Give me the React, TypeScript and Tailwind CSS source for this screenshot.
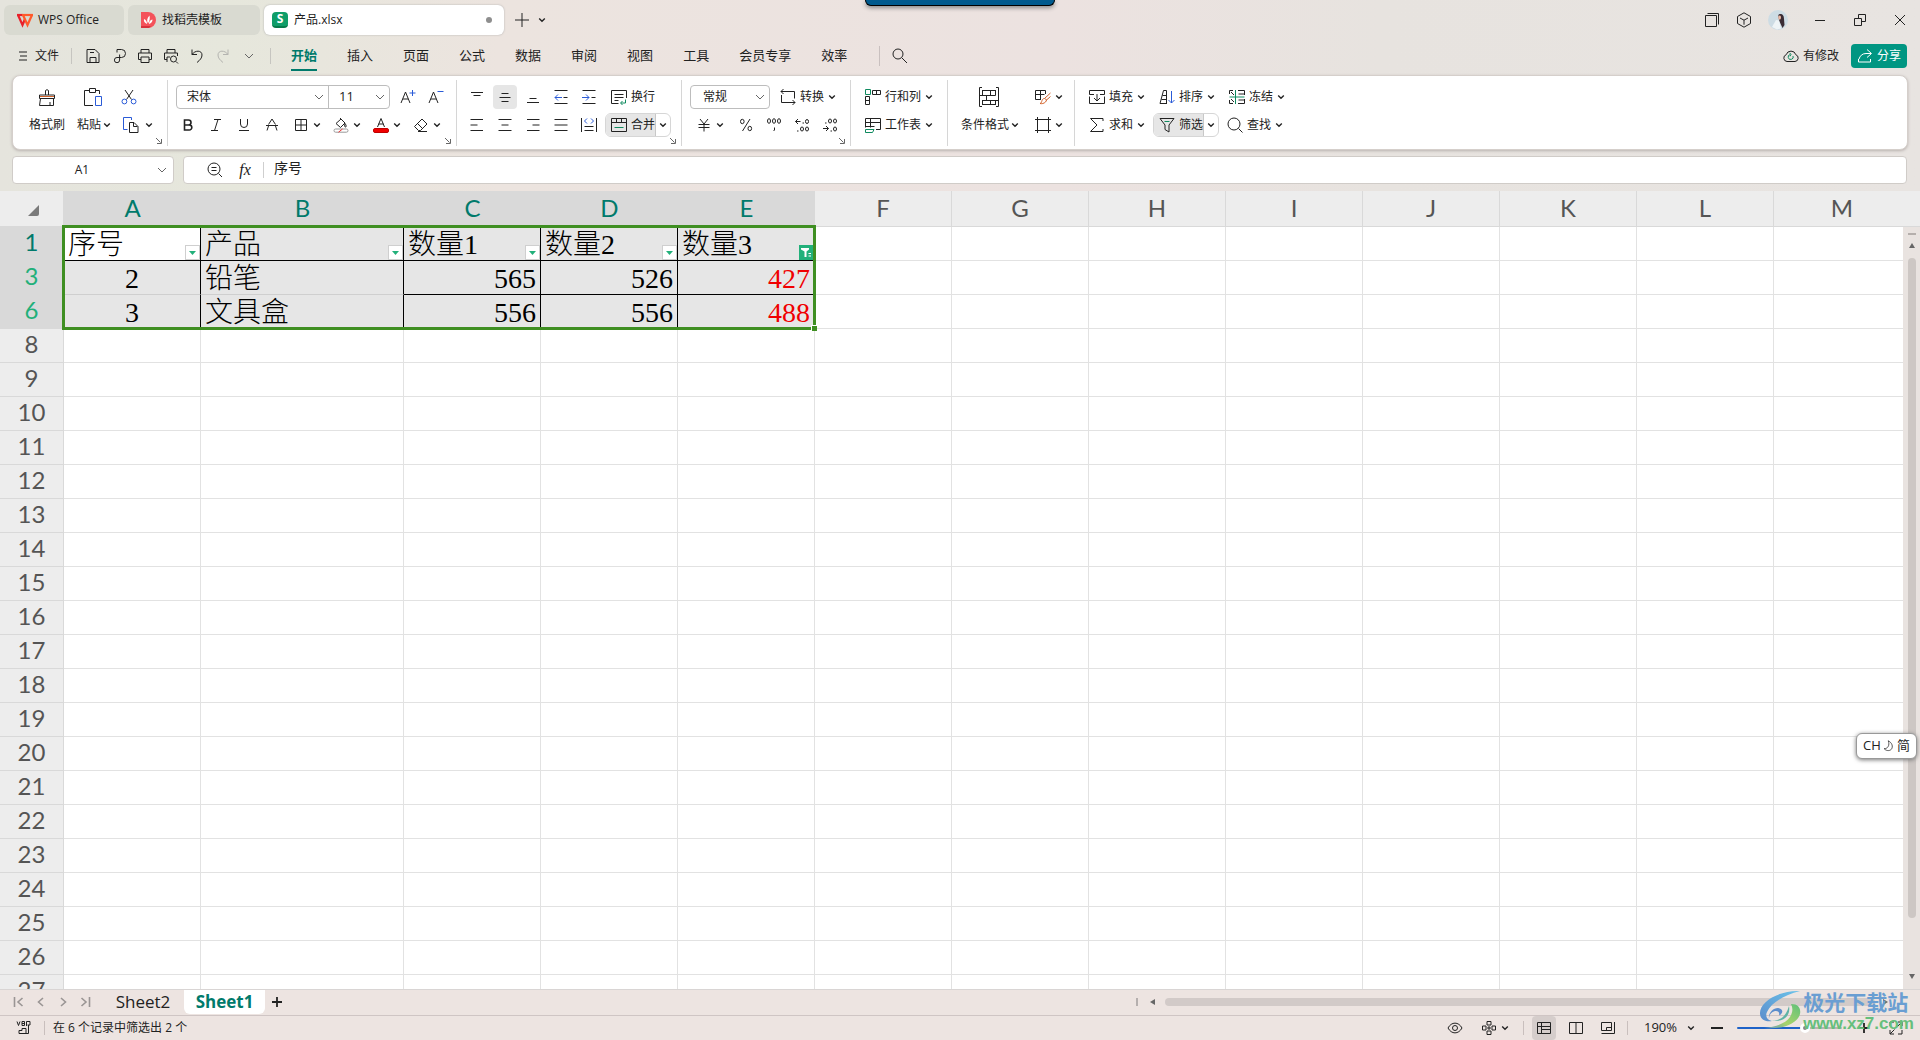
import React from "react";

type IconProps = {
  d?: string;
  blue?: string;
  green?: string;
  orange?: string;
  box?: number;
  className?: string;
  children?: React.ReactNode;
};

function Icon({ d, blue, green, orange, box = 16, className = "size-4", children }: IconProps) {
  return (
    <svg viewBox={`0 0 ${box} ${box}`} className={`shrink-0 ${className}`} fill="none" stroke="currentColor" strokeWidth="1" aria-hidden="true">
      {d && <path d={d} />}
      {blue && <path d={blue} stroke="#2a5bd7" />}
      {green && <path d={green} stroke="#0f8a5f" />}
      {orange && <path d={orange} stroke="#d2622a" />}
      {children}
    </svg>
  );
}

function Chev() {
  return (
    <svg viewBox="0 0 8 8" className="size-2 shrink-0" fill="none" stroke="currentColor" strokeWidth="1.4" aria-hidden="true">
      <path d="M1.2 2.6 4 5.3l2.8-2.7" />
    </svg>
  );
}

function ThinChev() {
  return (
    <svg viewBox="0 0 10 10" className="size-2.5 shrink-0" fill="none" stroke="#666" strokeWidth="1" aria-hidden="true">
      <path d="M1 3l4 4 4-4" />
    </svg>
  );
}

function Cell({ label, active, children }: { label: string; active?: boolean; children: React.ReactNode }) {
  return (
    <div className="flex w-7 justify-center">
      <button aria-label={label} className={`flex size-6 items-center justify-center rounded ${active ? "bg-[#e6e6e6]" : ""}`}>
        {children}
      </button>
    </div>
  );
}

function Split({ label, children }: { label: string; children: React.ReactNode }) {
  return (
    <button aria-label={label} className="flex h-6 w-10 items-center gap-1 pl-1">
      {children}
      <Chev />
    </button>
  );
}

function Tool({ text, chev = true, children }: { text: string; chev?: boolean; children: React.ReactNode }) {
  return (
    <button className="flex h-6 items-center gap-1 whitespace-nowrap">
      {children}
      <span>{text}</span>
      {chev && <Chev />}
    </button>
  );
}

function Pressed({ text, children }: { text: string; children: React.ReactNode }) {
  return (
    <div className="-mx-1.5 flex h-6 overflow-hidden rounded-md border border-[#d6d6d6]">
      <button className="flex items-center gap-1 border-r border-[#c8c8c8] bg-[#e6e6e6] pl-[5px] whitespace-nowrap">
        {children}
        <span>{text}</span>
      </button>
      <button aria-label={`${text}选项`} className="flex w-3.5 items-center justify-center">
        <Chev />
      </button>
    </div>
  );
}

function Sep() {
  return <div className="mt-1 h-[66px] w-px shrink-0 bg-[#d6d6d6]" />;
}

function Launch() {
  return (
    <button aria-label="更多设置" className="absolute right-1 bottom-1 size-2 text-[#666]">
      <Icon box={8} className="size-2" d="M1 1l4.5 4.5M6.500 2v4.500H2" />
    </button>
  );
}

const H = {
  left: "M1.5 2.5h12.500M1.5 8h7M1.5 13.5h12.500",
  center: "M1.5 2.5h13M4.5 8h7M1.5 13.5h13",
  right: "M2 2.5h12.500M7.500 8h7M2 13.5h12.500",
  just: "M1.5 2.5h13M1.5 8h13M1.5 13.5h13",
};

function TitleBar() {
  return (
    <header className="flex h-10 shrink-0 items-center pl-1">
      <div role="tablist" className="flex h-10 items-center">
        <button role="tab" className="flex h-[30px] w-[120px] items-center gap-1 rounded-md bg-[#d9dad1] pl-3">
          <svg viewBox="0 0 18 16" className="h-4 w-[18px]" fill="none" strokeWidth="2.200" aria-hidden="true">
            <path d="M1 3h5.500" stroke="#e8202a" />
            <path d="M2 3l4.500 10L9 7" stroke="#e8202a" />
            <path d="M6 3h11" stroke="#ff5a2c" />
            <path d="M7 3l4.500 10L16 3" stroke="#ff5a2c" />
          </svg>
          <span>WPS Office</span>
        </button>
        <button role="tab" className="ml-1 flex h-[30px] w-[132px] items-center gap-1.5 rounded-md bg-[#d9dad1] pl-3">
          <svg viewBox="0 0 16 16" className="size-4" aria-hidden="true">
            <path d="M1 0h7a8 8 0 010 16H1z" fill="#f4525a" />
            <path d="M1 14h10l-2 2H1z" fill="#d8323c" />
            <path d="M8 11.500C6.500 9 7 6 9.500 3.500c.6 3 .2 5.500-1.500 8zM7 12C4.500 11 3.500 9 4 7c2 1 3 2.500 3 5zM9 12c2.500-.8 3.500-2.200 3.500-4.500C10.300 8 9 9.500 9 12z" fill="#fff" />
          </svg>
          <span>找稻壳模板</span>
        </button>
        <button role="tab" aria-selected="true" className="ml-1 flex h-[30px] w-[240px] items-center gap-1.5 rounded-md bg-white px-2 shadow-[0_0_2px_#aaa]">
          <span className="flex size-4 items-center justify-center rounded-sm border-b-2 border-[#067a4a] bg-[#0f9d68] text-xs leading-3 font-bold text-white">S</span>
          <span>产品.xlsx</span>
          <span className="mr-1 ml-auto size-1.5 rounded-full bg-[#8e8e8e]" />
        </button>
      </div>
      <button aria-label="新建" className="ml-2.5 flex size-4 items-center justify-center">
        <Icon d="M8 1v14M1 8h14" />
      </button>
      <button aria-label="标签列表" className="ml-2">
        <Chev />
      </button>
      <div className="ml-auto flex items-center">
        <button aria-label="工作区" className="flex w-8 justify-center">
          <Icon d="M1.500 3.500h11v11h-11zM3.500 1.500h11v11" />
        </button>
        <button aria-label="应用" className="flex w-8 justify-center">
          <Icon d="M8 .8l6.500 3.700v7L8 15.200 1.500 11.500v-7zM4 6l4 2.200L12 6M8 8.200v4.500" />
        </button>
        <button aria-label="账号" className="flex w-9 justify-center">
          <svg viewBox="0 0 20 20" className="size-5" aria-hidden="true">
            <circle cx="10" cy="10" r="10" fill="#cddce4" />
            <path d="M12 4c3 0 4 2 4 5l.5 6-2 3-3-6.500-1-4C10 5.500 10.500 4 12 4z" fill="#3a2c34" />
            <path d="M11.500 5.500c1.500 0 2 2 1 3.800-1 .8-2 .2-2.200-1.300-.2-1.500.2-2.500 1.200-2.500z" fill="#e9b9a4" />
            <path d="M4 17l4-7 3 .5 2 8-4 1z" fill="#eef4f6" />
          </svg>
        </button>
        <button aria-label="最小化" className="ml-1 flex w-10 justify-center">
          <Icon d="M3 8.500h10" />
        </button>
        <button aria-label="还原" className="flex w-10 justify-center">
          <Icon box={14} className="size-3.5" d="M1.500 5.500h7v7h-7zM5.500 5.500v-4h7v7h-4" />
        </button>
        <button aria-label="关闭" className="flex w-10 justify-center">
          <Icon d="M3 3l10 10M13 3L3 13" />
        </button>
      </div>
    </header>
  );
}

const MENUS = ["开始", "插入", "页面", "公式", "数据", "审阅", "视图", "工具", "会员专享", "效率"];

function MenuBar() {
  const quick: [string, string][] = [
    ["保存", "M2 1.500h8l4 4v9H2zM5 14.500v-5h6v5M5 4.500h4"],
    ["输出", "M6 1.500h4.500a4 4 0 010 8H6a2.600 2.600 0 10 2.600 2.600V6.500M6 1.500v3"],
    ["打印", "M4 5V1.500h8V5M4 11.500H1.500V5h13v6.500H12M4 9h8v5.500H4z"],
    ["打印预览", "M4 5V1.500h8V5M4 11.500H1.500V5h13v3M4 14V9h3M7.500 11a3 3 0 106 0 3 3 0 10-6 0M13 13.500l2 2"],
    ["撤销", "M3 1.500v5h5M3 6.500C6 2 13 2 13 7c0 3-2 5-5 7.500"],
  ];
  return (
    <nav className="flex h-[35px] shrink-0 items-center pr-[13px] pb-1 pl-[19px]">
      <button className="flex items-center gap-2">
        <Icon box={8} className="h-3 w-2" d="M0 0h8M1 4h7M0 8h8" />
        <span>文件</span>
      </button>
      <div className="mr-2 ml-3 h-4 w-px bg-[#c6c5c0]" />
      {quick.map(([label, d]) => (
        <button key={label} aria-label={label} className="flex w-[26px] justify-center">
          <Icon d={d} />
        </button>
      ))}
      <button aria-label="恢复" className="flex w-[26px] justify-center text-[#b4b4b0]">
        <Icon d="M13 1.500v5H8M13 6.500C10 2 3 2 3 7c0 3 2 5 5 7.500" />
      </button>
      <button aria-label="更多命令" className="flex w-[26px] justify-center">
        <ThinChev />
      </button>
      <div className="mr-5 ml-2 h-4 w-px bg-[#c6c5c0]" />
      <div className="flex gap-[30px] pt-0.5 text-[13px]">
        {MENUS.map((m, i) => (
          <button key={m} className={i === 0 ? "h-7 border-b-2 border-[#007a6b] font-bold text-[#007a6b]" : "h-7 border-b-2 border-transparent"}>
            {m}
          </button>
        ))}
      </div>
      <div className="mr-3 ml-8 h-5 w-px bg-[#c9c0bf]" />
      <button aria-label="搜索">
        <Icon d="M1 6a5 5 0 1010 0A5 5 0 101 6M9.800 9.800L15 15" />
      </button>
      <button className="ml-auto flex items-center gap-1">
        <Icon d="M4 13.500a3.500 3.500 0 01-.8-6.800 5 5 0 019.600 0 3.500 3.500 0 01-.8 6.800z" green="M10 8a2.500 2.500 0 11-2.800-1.500M6.500 4.800l1.500 1.500-1 2" />
        <span>有修改</span>
      </button>
      <button className="ml-3 flex h-6 items-center gap-1 rounded bg-[#009682] px-1.5 text-white">
        <Icon d="M10 1.500L14.500 5.500 10 9.500M14 5.500H9C5 5.500 3 8 2 11M1.500 11v3h12v-3" />
        <span>分享</span>
      </button>
    </nav>
  );
}

function Ribbon() {
  const row = "flex h-6 items-center";
  const group = "relative flex shrink-0 flex-col gap-1 pt-[9px]";
  return (
    <section className="mx-3 flex h-[75px] shrink-0 overflow-hidden rounded-lg border border-[#d5cfcb] bg-white shadow-[0_1px_3px_#b9b2af]">
      <div className={`${group} w-[154px] pl-4`}>
        <div className="flex">
          <button className="flex w-9 flex-col items-center gap-2">
            <span className="flex h-6 items-center"><Icon box={20} className="size-5" d="M8.500 8V3.500a2 2 0 013 0V8M2.500 8h15v3.500h-15zM3.500 11.500L2.500 18.500h14v-7M13 15v3.500" orange="M3 9.500h14" /></span>
            <span className="leading-4">格式刷</span>
          </button>
          <div className="ml-3 flex w-9 flex-col gap-2">
            <button aria-label="粘贴" className="flex h-6 items-center pl-1.5"><Icon box={20} className="size-5" d="M6 3.500H1.500v15H10M13 3.500h3.500V7M6.500 1.500h6v4h-6z" blue="M12.500 9.500h6v9h-6z" /></button>
            <button className="flex items-center gap-0.5 leading-4 whitespace-nowrap">粘贴<Chev /></button>
          </div>
          <div className="ml-2 flex flex-col gap-1">
            <button aria-label="剪切" className="flex h-6 items-center"><Icon d="M4 1l6.500 9.500M12 1L5.500 10.500" blue="M1 12.500a2.400 2.400 0 104.800 0 2.400 2.400 0 10-4.800 0M10.200 12.500a2.400 2.400 0 104.800 0 2.400 2.400 0 10-4.800 0" /></button>
            <button aria-label="复制" className="flex h-6 items-center gap-1.5 pl-0.5"><Icon d="M6.500 5.500h4.500l4 4v6H6.500zM10.500 5.500v4h4" blue="M4.500 12.500h-4v-12h8V3" /><Chev /></button>
          </div>
        </div>
        <Launch />
      </div>
      <Sep />
      <div className={`${group} w-[288px] pl-2`}>
        <div className={row}>
          <div className="flex h-6 rounded border border-[#bdbdbd]">
            <label className="relative flex w-[152px] items-center border-r border-[#bdbdbd]">
              <select aria-label="字体" className="h-full w-full appearance-none bg-transparent pl-2.5"><option>宋体</option></select>
              <span className="pointer-events-none absolute right-1"><ThinChev /></span>
            </label>
            <label className="relative flex w-[60px] items-center">
              <select aria-label="字号" className="h-full w-full appearance-none bg-transparent pl-2.5 text-[13px]"><option>11</option></select>
              <span className="pointer-events-none absolute right-1"><ThinChev /></span>
            </label>
          </div>
          <div className="ml-1 flex">
            <Cell label="增大字号"><Icon d="M1 14L5.500 3 10 14M2.800 10h5.500" blue="M12.500 1v6M9.500 4h6" /></Cell>
            <Cell label="减小字号"><Icon d="M1 14L5.500 3 10 14M2.800 10h5.500" blue="M9.500 2.500h6" /></Cell>
          </div>
        </div>
        <div className="-ml-0.5 flex h-6 items-center">
          <Cell label="加粗"><Icon><path d="M4.500 3h4a2.400 2.400 0 010 5h-4zM4.500 8h4.800a2.500 2.500 0 010 5H4.500z" strokeWidth="1.600" /></Icon></Cell>
          <Cell label="倾斜"><Icon d="M6 2.500h7M3 13.500h7M10 2.500L6.500 13.500" /></Cell>
          <Cell label="下划线"><Icon d="M4.500 2v5a3.500 3.500 0 007 0V2M3 13.500h10" /></Cell>
          <Cell label="删除线"><Icon d="M4.500 7.500L8 2l3.500 5.500M2 8.500h12M4.500 9L3 13.500M11.500 9l1.500 4.500" /></Cell>
          <div className="w-[3px]" />
          <Split label="边框"><Icon d="M2.500 2.500h11v11h-11zM8 2.500V13.500M2.500 8h11" /></Split>
          <Split label="填充颜色"><Icon d="M7 1l5 5-4.500 4.500L3 6.500 8 2M12 6.500c1.500 2 1.500 3.500.5 3.500s-1-1.500-.5-3.500"><rect x="1" y="12" width="14" height="3.200" rx="1.600" stroke="#999" /><path d="M5.500 15.200l4-3.200" stroke="#e33" /></Icon></Split>
          <Split label="字体颜色"><Icon d="M4.500 10L8 1.500 11.500 10M5.500 7h5"><rect x=".5" y="11.500" width="15" height="4" rx="1.500" fill="#f00000" stroke="#c00000" /></Icon></Split>
          <Split label="清除"><Icon d="M9 2l5 5-6.500 6.500H5.500L1.500 9.500zM4.500 6.500l5 5M5 14.500h9" /></Split>
        </div>
        <Launch />
      </div>
      <Sep />
      <div className={`${group} w-[224px] pl-1.5`}>
        <div className={row}>
          <Cell label="顶端对齐"><Icon d="M2 3.500h12M4.500 6.500h7" /></Cell>
          <Cell label="垂直居中" active><Icon d="M4.500 4.500h7M2.500 8.500h11M4.500 12.500h7" /></Cell>
          <Cell label="底端对齐"><Icon d="M4.500 9.500h7M2 13.500h12" /></Cell>
          <Cell label="减少缩进"><Icon d="M1.500 1.500h13M1.500 14.500h13M10.500 8.500h4" blue="M5 5.500L2 8.500l3 3M2 8.500h7" /></Cell>
          <Cell label="增加缩进"><Icon d="M1.500 1.500h13M1.500 14.500h13M10.500 8.500h4" blue="M5 5.500l3 3-3 3M1 8.500h7" /></Cell>
          <div className="ml-2"><Tool text="换行" chev={false}><Icon d="M15.500 9V1.500H.5V14.500h7M3.500 5.500h9M3.500 8.500h9M3.500 11.500h4" green="M14.500 10.500v3.500H10M11.500 12L9.500 14l2 2" /></Tool></div>
        </div>
        <div className={row}>
          <Cell label="左对齐"><Icon d={H.left} /></Cell>
          <Cell label="水平居中"><Icon d={H.center} /></Cell>
          <Cell label="右对齐"><Icon d={H.right} /></Cell>
          <Cell label="两端对齐"><Icon d={H.just} /></Cell>
          <Cell label="分散对齐"><Icon d="M.5 1v14M15.500 1v14M3.500 9.500h9M3.500 13.500h9" blue="M6 1.500L3.500 4 6 6.500M10 1.500L12.500 4 10 6.500" /></Cell>
          <div className="ml-2"><Pressed text="合并"><Icon d="M.5 1.500h15v13H.5zM.5 5.500h15M5.500 1.500v4M10.500 1.500v4" green="M3.500 10.500h9" /></Pressed></div>
        </div>
        <Launch />
      </div>
      <Sep />
      <div className={`${group} w-[168px] pl-2`}>
        <div className={row}>
          <label className="relative flex h-6 w-20 items-center rounded border border-[#bdbdbd]">
            <select aria-label="数字格式" className="h-full w-full appearance-none bg-transparent pl-3"><option>常规</option></select>
            <span className="pointer-events-none absolute right-1"><ThinChev /></span>
          </label>
          <div className="ml-2.5"><Tool text="转换"><Icon d="M1 2.500h13.500v7M3.500 0L1 2.500l2.500 2.500M1.500 6v7.500H15M12.500 11l2.500 2.500-2.500 2.500" /></Tool></div>
        </div>
        <div className="flex h-6 items-center pl-0.5">
          <Split label="货币"><Icon d="M4 2l4 5 4-5M2.500 7.500h11M2.500 10.500h11M8 7.500V14.500" /></Split>
          <Cell label="百分比"><Icon d="M12 2L4.500 14M2.500 4.500a1.800 2.200 0 103.600 0 1.800 2.200 0 10-3.600 0M10 11.500a1.800 2.200 0 103.600 0 1.800 2.200 0 10-3.600 0" /></Cell>
          <Cell label="千位分隔"><Icon d="M1.500 4a1.500 2.300 0 103 0 1.500 2.300 0 10-3 0M6.500 4a1.500 2.300 0 103 0 1.500 2.300 0 10-3 0M11.500 4a1.500 2.300 0 103 0 1.500 2.300 0 10-3 0M8.500 10.500v2.500l-1 1" /></Cell>
          <Cell label="增加小数位"><Icon d="M6.500 4.500H1.500M4 2L1.500 4.500 4 7M8.500 6h1.500M11.500 4.500a1.500 2 0 103 0 1.500 2 0 10-3 0M3 14h1.500M6.500 12a1.500 2 0 103 0 1.500 2 0 10-3 0M11.500 12a1.500 2 0 103 0 1.500 2 0 10-3 0" /></Cell>
          <Cell label="减少小数位"><Icon d="M1 11.500h5.500M4 9l2.500 2.500L4 14M8.500 14h1.500M11.500 12a1.500 2 0 103 0 1.500 2 0 10-3 0M3 6h1.500M6.500 4a1.500 2 0 103 0 1.500 2 0 10-3 0M11.500 4a1.500 2 0 103 0 1.500 2 0 10-3 0" /></Cell>
        </div>
        <Launch />
      </div>
      <Sep />
      <div className={`${group} w-24 pl-3.5`}>
        <Tool text="行和列"><Icon d="M7.500 1.500h8v4h-8zM11.500 1.500v4M.5 7.500h4v8h-4zM.5 11.500h4" green="M.5.5h5v5h-5z" /></Tool>
        <Tool text="工作表"><Icon d="M.5 10.500v-9h15v11H11M.5 5.500h15M5.500 1.500v9M.5 9.500h9" green="M.5 12.500h8.500L7.500 15.500H.5z" /></Tool>
      </div>
      <Sep />
      <div className="flex w-[126px] shrink-0 pt-[9px] pl-[13px]">
        <div className="flex w-[58px] flex-col gap-2">
          <span className="flex h-6 items-center pl-[18px]"><Icon box={20} className="size-5" d="M3 .5H.5v19H3M17 .5h2.500v19H17M3 3.500h14M.5 8.500h16M3 13.500h16M3 17.500h14M3.500 3v5.500M11.500 3v5.500M16.500 3v5.500M7.500 8.500v5M3.500 13.500v4M11.500 13.500v4M16.500 13.500v4" /></span>
          <button className="flex items-center gap-0.5 leading-4 whitespace-nowrap">条件格式<Chev /></button>
        </div>
        <div className="ml-3 flex flex-col gap-1">
          <Split label="表格样式"><Icon d="M6 10.500H.5v-9h10V5M.5 5.500h9M5.500 1.500v9" orange="M15.500 4L9.500 9.500M15.500 7.500L11 11.500M9.500 9.500c2 .5 2.500 2 1 3.500s-4 2-5.500 1.500c1.500-.5 1.500-1.500 2-3s1.500-2 2.500-2z" /></Split>
          <Split label="单元格"><Icon d="M2.500 0v16M13.500 0v16M0 2.500h16M0 13.500h16" /></Split>
        </div>
      </div>
      <Sep />
      <div className={`${group} pl-3.5`}>
        <div className="flex h-6 items-center gap-3.5">
          <Tool text="填充"><Icon d="M5 5.500H.5v-4h15v4H11M.5 7.500v7h15v-7M8 5v7M5 9l3 3 3-3" /></Tool>
          <Tool text="排序"><Icon d="M1 14.500L4.500 1.500h3v13M1 14.500h7M3.500 6.500h4M2.500 10.500h5" blue="M12.500 2v12M9.500 11l3 3 3-3" /></Tool>
          <Tool text="冻结"><Icon d="M.5 5V1.500H4M.5 11v3.500H4M9 1.500h6.500V6M9 14.500h6.500V10M9.500 5h6M9.500 11h6M2 3l3 3M2 10l3 3" green="M6.500 1v14M.5 8h15" /></Tool>
        </div>
        <div className="flex h-6 items-center gap-3.5">
          <Tool text="求和"><Icon d="M14 4V1.500H1.500L8 8l-6.500 6.500H14V12" /></Tool>
          <Pressed text="筛选"><Icon d="M1 1.500h14l-5 6.500v7l-4-2.500V8z" green="M5.500 4.500h5" /></Pressed>
          <Tool text="查找"><Icon d="M1 7a6 6 0 1012 0A6 6 0 101 7M11.500 11.500L15.500 15.500" /></Tool>
        </div>
      </div>
    </section>
  );
}

function FormulaBar() {
  return (
    <div className="mr-[13px] ml-3 mt-1.5 flex h-7 shrink-0 gap-[9px]">
      <div className="flex w-[162px] items-center rounded border border-[#d0ccc8] bg-white pr-1.5">
        <input aria-label="名称框" defaultValue="A1" className="min-w-0 flex-1 bg-transparent pr-1.5 text-center outline-none" />
        <ThinChev />
      </div>
      <div className="flex flex-1 items-center rounded border border-[#d0ccc8] bg-white pl-[23px]">
        <button aria-label="缩放"><Icon d="M1 7a6 6 0 1012 0A6 6 0 101 7M11.500 11.500L15 15M4.500 5.500h5M4.500 8.500h5" /></button>
        <button aria-label="插入函数" className="ml-3.5 w-4 font-['Liberation_Serif',serif] text-base leading-4 italic">fx</button>
        <div className="mx-2.5 h-4 w-px bg-[#cfcfcf]" />
        <input aria-label="编辑栏" defaultValue="序号" className="flex-1 bg-transparent pb-1 text-sm outline-none" />
      </div>
    </div>
  );
}

const COLS = "ABCDEFGHIJKLM".split("");
const DATA: Record<number, string[]> = {
  1: ["序号", "产品", "数量1", "数量2", "数量3"],
  3: ["2", "铅笔", "565", "526", "427"],
  6: ["3", "文具盒", "556", "556", "488"],
};
const ROWS = [1, 3, 6, ...Array.from({ length: 20 }, (_, i) => i + 8)];

function FilterButton({ on }: { on: boolean }) {
  return on ? (
    <button aria-label="已筛选" className="absolute right-0 bottom-0 flex size-[15px] items-center justify-center bg-[#22b07a]">
      <svg viewBox="0 0 13 13" className="size-[13px]" aria-hidden="true">
        <path d="M1 2h8v1.500L6.500 5.500V11H4.500V5.500L1 3.500z" fill="#fff" />
        <path d="M8.500 7.500H11M8.500 10H11" stroke="#fff" />
      </svg>
    </button>
  ) : (
    <button aria-label="筛选" className="absolute right-0 bottom-0 flex size-[15px] items-center justify-center border border-[#cfcfcf] bg-white">
      <svg viewBox="0 0 7 4" className="h-1 w-[7px]" aria-hidden="true"><path d="M0 0h7L3.500 4z" fill="#22b07a" /></svg>
    </button>
  );
}

function Sheet() {
  return (
    <main className="mt-[7px] flex min-h-0 flex-1">
      <div className="relative min-w-0 flex-1 overflow-hidden bg-white">
        <table className="w-[1911px] table-fixed border-separate border-spacing-0 font-['Lato',sans-serif] text-2xl">
          <colgroup>
            <col className="w-16" />
            {COLS.map((c) => <col key={c} className={c === "B" ? "w-[203px]" : "w-[137px]"} />)}
          </colgroup>
          <thead>
            <tr className="h-9">
              <th className="border-r border-b border-[#d9d9d9] bg-[#ededed] p-0">
                <svg viewBox="0 0 11 11" className="mt-1 ml-7 size-[11px]" aria-hidden="true"><path d="M11 0v9a2 2 0 01-2 2H0z" fill="#7a7a7a" /></svg>
              </th>
              {COLS.map((c, i) => (
                <th key={c} scope="col" className={i < 5 ? "border-b border-[#d9d9d9] bg-[#d9d9d9] p-0 pb-0.5 leading-8 font-normal text-[#007a6b]" : "border-r border-b border-[#d9d9d9] bg-[#ededed] p-0 pb-0.5 leading-8 font-normal text-[#555]"}>
                  {c}
                </th>
              ))}
            </tr>
          </thead>
          <tbody>
            {ROWS.map((r) => {
              const data = DATA[r];
              return (
                <tr key={r} className="h-[34px]">
                  <th scope="row" className={`border-r border-b p-0 pb-1 leading-7 font-normal ${data ? `border-[#d9d9d9] bg-[#d9d9d9] ${r === 1 ? "text-[#007a6b]" : "text-[#22b07a]"}` : "border-[#d9d9d9] bg-[#ededed] text-[#555]"}`}>
                    {r}
                  </th>
                  {COLS.map((c, i) => {
                    const text = data?.[i];
                    if (text === undefined) return <td key={c} className="border-r border-b border-[#e2e2e2] p-0" />;
                    const align = r === 1 || i === 1 ? "text-left" : i === 0 ? "text-center" : "text-right";
                    const bottom = r > 1 && i < 2 ? "border-b-[#cfcfcf]" : "border-b-black";
                    const bg = r === 1 && i === 0 ? "bg-white" : "bg-[#e6e6e6]";
                    const ink = r > 1 && i === 4 ? "text-[#f00000]" : "text-black";
                    return (
                      <td key={c} className={`relative border-r border-b border-r-black px-1 pt-0.5 pb-0 font-['Liberation_Serif','Noto_Sans_CJK_SC',serif] text-[28px] leading-[31px] font-light whitespace-nowrap ${align} ${bottom} ${bg} ${ink}`}>
                        {text}
                        {r === 1 && <FilterButton on={i === 4} />}
                      </td>
                    );
                  })}
                </tr>
              );
            })}
          </tbody>
        </table>
        <div className="pointer-events-none absolute top-[34px] left-[62px] h-[105px] w-[754px] border-[3px] border-[#3f8f22]">
          <div className="absolute -right-1 -bottom-1 size-1.5 border-t border-l border-white bg-[#3f8f22]" />
        </div>
      </div>
      <div className="flex w-[17px] flex-col items-center bg-[#e9e3e0]">
        <div className="h-9 w-full border-b border-[#d9d9d9] bg-[#ededed]" />
        <div className="mt-1.5 h-0.5 w-2 bg-[#b5afac]" />
        <svg viewBox="0 0 6 5" className="mt-2 h-[5px] w-1.5" aria-hidden="true"><path d="M3 0l3 5H0z" fill="#666" /></svg>
        <div className="mt-2.5 w-2 flex-1 rounded-full bg-[#cdc7c4]" />
        <svg viewBox="0 0 6 5" className="mt-14 mb-2.5 h-[5px] w-1.5" aria-hidden="true"><path d="M3 5l3-5H0z" fill="#666" /></svg>
      </div>
    </main>
  );
}

function SheetTabs() {
  const nav: [string, string][] = [
    ["第一张", "M1.500 1v10M9.500 2L5 6l4.500 4"],
    ["上一张", "M8 2L3.500 6 8 10"],
    ["下一张", "M4 2l4.500 4L4 10"],
    ["最后一张", "M2.500 2L7 6l-4.500 4M10.500 1v10"],
  ];
  return (
    <div className="flex h-[27px] shrink-0 items-start border-t border-b border-t-[#d9d5d4] border-b-[#cfc5c4]">
      <div className="flex h-6 items-center pl-2 text-[#9a9594]">
        {nav.map(([label, d]) => (
          <button key={label} aria-label={label} className="flex w-[22px] justify-center">
            <svg viewBox="0 0 12 12" className="size-3" fill="none" stroke="currentColor" strokeWidth="1.600" aria-hidden="true"><path d={d} /></svg>
          </button>
        ))}
      </div>
      <div className="flex font-['Open_Sans',sans-serif] text-[17px] leading-6">
        <button className="w-[88px] pl-1.5">Sheet2</button>
        <button className="w-[81px] rounded-b-md bg-white font-bold text-[#007a6b]">Sheet1</button>
      </div>
      <button aria-label="新建工作表" className="flex h-6 w-6 items-center justify-center">
        <svg viewBox="0 0 10 10" className="size-2.5" stroke="currentColor" strokeWidth="1.800" aria-hidden="true"><path d="M5 0v10M0 5h10" /></svg>
      </button>
      <div className="ml-auto flex h-6 w-[784px] items-center">
        <div className="h-2 w-0.5 bg-[#b5afae]" />
        <svg viewBox="0 0 5 6" className="ml-3 h-1.5 w-[5px]" aria-hidden="true"><path d="M0 3l5-3v6z" fill="#666" /></svg>
        <div className="ml-2.5 h-2 flex-1 rounded-full bg-[#d2cac8]" />
        <svg viewBox="0 0 5 6" className="mr-8 ml-2 h-1.5 w-[5px]" aria-hidden="true"><path d="M5 3L0 0v6z" fill="#666" /></svg>
      </div>
    </div>
  );
}

function StatusBar() {
  return (
    <footer className="flex h-6 shrink-0 items-center pr-4 pl-4">
      <button aria-label="宏"><Icon d="M1 1.500l1.500 4L4 1.500M6 1.500v4h2.500v-4zM6 3.500h2.500M10.500 6V1.500H14V5h-2.500M6 8.500h4v5H3v-3h3zM12.500 5v8.500H10" /></button>
      <div className="mr-2 ml-3 h-3.5 w-px bg-[#c9bfbd]" />
      <span>在 6 个记录中筛选出 2 个</span>
      <div className="ml-auto flex items-center">
        <button aria-label="护眼模式"><Icon d="M1 8c3.500-6.500 10.500-6.500 14 0-3.500 6.500-10.500 6.500-14 0zM5.500 8a2.500 2.500 0 105 0 2.500 2.500 0 10-5 0" /></button>
        <button aria-label="阅读模式" className="ml-[18px] flex items-center gap-1"><Icon d="M6 1.500h4v3.500H6zM6 11h4v3.500H6zM1.500 6h3.500v4H1.500zM11 6h3.500v4H11zM8 6v4M6 8h4" /><Chev /></button>
        <div className="mr-2 ml-3.5 h-3.5 w-px bg-[#c9bfbd]" />
        <button aria-label="普通视图" className="flex size-6 items-center justify-center rounded bg-[#d5cdcb]"><Icon d="M1.500 2.500h13v11h-13zM1.500 6.500h13M5.500 2.500v11M5.500 9.500h9" /></button>
        <button aria-label="分页预览" className="ml-2 flex size-6 items-center justify-center"><Icon d="M1.500 2.500h13v11h-13zM8 2.500v11" /></button>
        <button aria-label="页面布局" className="ml-2 flex size-6 items-center justify-center"><Icon d="M1.500 2.500h10v8h-10zM14.500 2v11.500h-13M6.500 10.500v-3h5" /></button>
        <div className="mr-4 ml-[7px] h-3.5 w-px bg-[#c9bfbd]" />
        <button className="flex w-[51px] items-center justify-between text-[13px]">190%<Chev /></button>
        <button aria-label="缩小" className="ml-4 flex w-3 justify-center"><span className="h-0.5 w-3 bg-[#222]" /></button>
        <input type="range" aria-label="显示比例" min="0" max="100" defaultValue="66" className="mr-4 ml-3.5 h-0.5 w-[105px] appearance-none rounded bg-[linear-gradient(90deg,#1e62c8_66%,#b9b5b4_66%)] [&::-webkit-slider-thumb]:size-2.5 [&::-webkit-slider-thumb]:appearance-none [&::-webkit-slider-thumb]:rounded-full [&::-webkit-slider-thumb]:border-[3px] [&::-webkit-slider-thumb]:border-white [&::-webkit-slider-thumb]:bg-[#888]" />
        <button aria-label="放大"><svg viewBox="0 0 12 12" className="size-3" stroke="currentColor" strokeWidth="1.800" aria-hidden="true"><path d="M6 1v10M1 6h10" /></svg></button>
        <button aria-label="全屏" className="ml-[18px]"><Icon d="M2 6V2h4M10 2h4v4M14 10v4h-4M6 14H2v-4M9.500 6.500L14 2M2 14l4.500-4.500" /></button>
      </div>
    </footer>
  );
}

function SiteMark() {
  return (
    <div className="pointer-events-none absolute right-1.5 bottom-1.5 flex items-center gap-0.5">
      <svg viewBox="0 0 42 40" className="mb-1 h-10 w-[42px]" aria-hidden="true">
        <defs>
          <linearGradient id="swoosh" x1="0" y1="1" x2="1" y2="0">
            <stop offset="0" stopColor="#5b8dcc" />
            <stop offset="1" stopColor="#6cc3ea" />
          </linearGradient>
          <linearGradient id="leaf" x1="1" y1="0" x2="0" y2="1">
            <stop offset="0" stopColor="#5fc07a" />
            <stop offset=".6" stopColor="#a8d46a" />
            <stop offset="1" stopColor="#5b8dcc" />
          </linearGradient>
        </defs>
        <path d="M41 1C20 0 0 12 1 24c.5 6 6 8 12 7-5-1-7-5-5-9C12 13 25 5 41 1z" fill="url(#swoosh)" />
        <path d="M10 29c-1-6 4-11 9-11 5 .5 6 5 1 7.500 1-3-1-5-4-4.500-4 1-6 4-6 8z" fill="#5b8dcc" />
        <path d="M32 14c8 0 10 5 9 10C39 33 24 40 5 38c12-1 22-5 26-11 3-5 3-9 1-13z" fill="url(#leaf)" />
        <path d="M13 30c9 1 14-4 17-14 2 10-6 17-17 14z" fill="#5fb3a5" />
      </svg>
      <div className="flex flex-col font-bold">
        <span className="text-[21px] leading-6 text-[#6a9ed2]">极光下载站</span>
        <span className="font-['Liberation_Sans',sans-serif] text-[17px] leading-5 text-[#66bf7c]">www.xz7.com</span>
      </div>
    </div>
  );
}

export default function App() {
  return (
    <div className="relative flex h-screen flex-col overflow-hidden bg-[linear-gradient(90deg,#e5e4dd_0%,#e6e7dc_12%,#ece4df_26%,#ece2e0_55%,#e7e3df_72%,#e8e4e1_100%)] font-['Open_Sans','Noto_Sans_CJK_SC',sans-serif] text-xs text-[#222]">
      <TitleBar />
      <MenuBar />
      <Ribbon />
      <FormulaBar />
      <Sheet />
      <div className="shrink-0 bg-[#ede4e1]">
        <SheetTabs />
        <StatusBar />
      </div>
      <div className="absolute top-0 left-[45%] ml-px h-1.5 w-[190px] rounded-b-md border border-t-0 border-black bg-[#005a8e] shadow-[0_2px_4px_#888]" />
      <button className="absolute top-[733px] right-[3px] flex h-[26px] w-[61px] items-center justify-center gap-0.5 rounded-md border border-[#999] bg-white text-[13px] shadow-[0_1px_4px_#777]">
        <span>CH</span>
        <Icon className="size-3" d="M7 1c5 2.500 7 8 4 11.500-2.500 2.500-7 2-9.500-1C6 12 9.500 7 7 1z" />
        <span>简</span>
      </button>
      <SiteMark />
    </div>
  );
}
